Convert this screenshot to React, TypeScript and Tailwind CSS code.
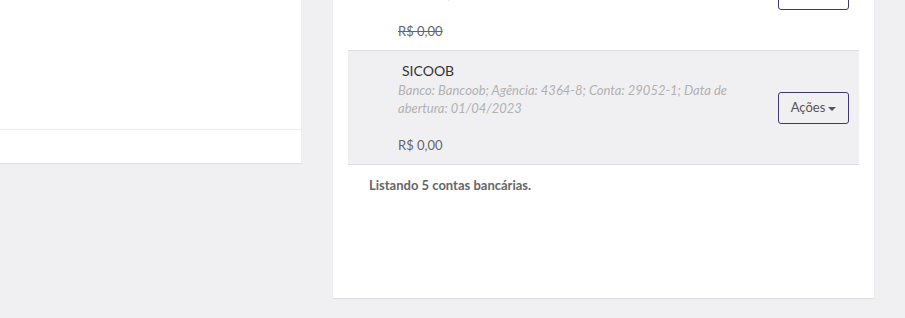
import { ChevronDown } from 'lucide-react';

const contas = [
  {
    nome: 'CAIXA',
    descricao: 'Banco: Caixa Econômica Federal; Agência: 0921; Conta: 10483-2; Data de abertura: 15/02/2023',
    saldo: 'R$ 0,00',
    inativa: true,
  },
  {
    nome: 'SICOOB',
    descricao: 'Banco: Bancoob; Agência: 4364-8; Conta: 29052-1; Data de abertura: 01/04/2023',
    saldo: 'R$ 0,00',
    inativa: false,
  },
];

function AcoesButton() {
  return (
    <button className="flex items-center gap-[3px] h-[32px] w-[71px] justify-center rounded-[3px] border border-[#3f3a6e] bg-transparent text-[13px] text-[#555]">
      Ações
      <span className="w-0 h-0 border-l-[4px] border-r-[4px] border-t-[4px] border-l-transparent border-r-transparent border-t-[#555] mt-[1px]" />
    </button>
  );
}

export default function App() {
  return (
    <div className="w-[905px] h-[318px] overflow-hidden bg-[#f0f0f3] font-['Lato','Liberation_Sans',sans-serif]">
      <div className="flex items-start gap-[32px] -mt-[83px]">
        <div className="w-[301px] bg-white shadow-[0_1px_1px_rgba(0,0,0,0.07)]">
          <div className="h-[212px]" />
          <div className="h-[34px] border-t border-[#ececef]" />
        </div>

        <div className="w-[541px] bg-white shadow-[0_1px_1px_rgba(0,0,0,0.07)] px-[15px] pt-[20px]">
          <div>
            {contas.map((c, i) => (
              <div
                key={c.nome}
                className={
                  'flex items-center justify-between pl-[50px] pr-[10px] pt-[10px] pb-[9px] border-b border-[#dcdce0] ' +
                  (i === 1 ? 'bg-[#f0f0f3]' : 'bg-white')
                }
              >
                <div className="w-[335px]">
                  <div className="text-[14px] leading-[20px] text-[#333] pl-[4px]">{c.nome}</div>
                  <div className="text-[13px] leading-[18px] italic text-[#b0b0b0]">{c.descricao}</div>
                  <div
                    className={
                      'mt-[18px] text-[13px] leading-[20px] text-[#666] ' + (c.inativa ? 'line-through' : '')
                    }
                  >
                    {c.saldo}
                  </div>
                </div>
                <AcoesButton />
              </div>
            ))}
          </div>
          <div className="pl-[21px] pt-[11px] pb-[104px] text-[13px] leading-[18px] font-bold text-[#666]">
            Listando 5 contas bancárias.
          </div>
        </div>
      </div>
    </div>
  );
}
